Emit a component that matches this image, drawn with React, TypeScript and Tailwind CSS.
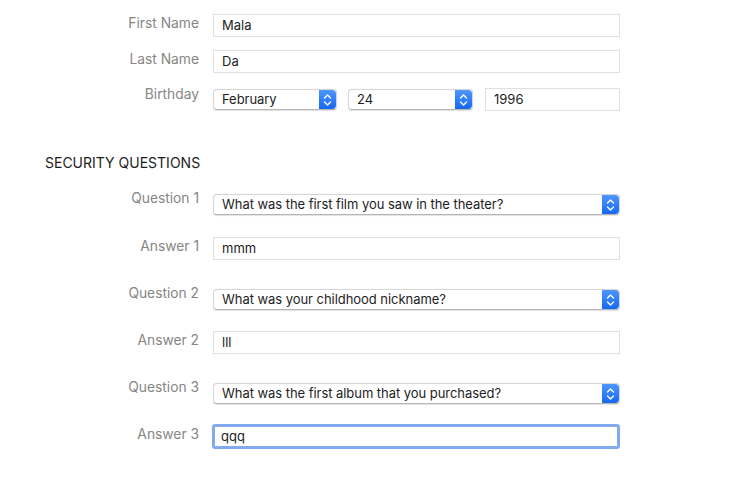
import React from "react";

const font = { fontFamily: "Inter, 'Noto Sans', sans-serif" };

function Stepper() {
  return (
    <div className="w-[17px] h-full rounded-r-[4px] bg-gradient-to-b from-[#4d96ff] to-[#1467f2] flex items-center justify-center shrink-0">
      <svg width="9" height="14" viewBox="0 0 9 14" fill="none">
        <path d="M1.5 5 L4.5 2 L7.5 5" stroke="white" strokeWidth="1.4" strokeLinecap="round" strokeLinejoin="round" />
        <path d="M1.5 9 L4.5 12 L7.5 9" stroke="white" strokeWidth="1.4" strokeLinecap="round" strokeLinejoin="round" />
      </svg>
    </div>
  );
}

function Popup({ value, className = "" }: { value: string; className?: string }) {
  return (
    <div
      className={`h-[21px] flex items-stretch bg-white rounded-[4px] border border-[#d6d6d6] border-b-[#b5b5b5] shadow-[0_0.5px_1px_rgba(0,0,0,0.12)] ${className}`}
    >
      <div className="flex-1 pl-[8px] text-[13px] leading-[19px] text-[#1d1d1d] truncate tracking-[-0.05px]">{value}</div>
      <Stepper />
    </div>
  );
}

function Field({ value, focused = false, className = "" }: { value: string; focused?: boolean; className?: string }) {
  if (focused) {
    return (
      <div className={`h-[25px] -ml-[1px] -mt-[1px] border-[3px] border-[#83aaf0] rounded-[3px] bg-white ${className}`}>
        <div className="pl-[6px] text-[13px] leading-[19px] text-[#1d1d1d]">{value}</div>
      </div>
    );
  }
  return (
    <div className={`h-[23px] border border-[#e0e0e0] bg-white ${className}`}>
      <div className="pl-[8px] text-[13px] leading-[21px] text-[#1d1d1d]">{value}</div>
    </div>
  );
}

// lift: how far the label sits from the control's top edge
function Row({
  label,
  children,
  className = "",
  lift = "mt-[1px]",
}: {
  label: string;
  children: React.ReactNode;
  className?: string;
  lift?: string;
}) {
  return (
    <div className={`flex items-start ${className}`}>
      <div className={`w-[199px] text-right text-[13.8px] leading-[16px] text-[#868686] shrink-0 ${lift}`}>
        {label}
      </div>
      <div className="ml-[14px] w-[407px]">{children}</div>
    </div>
  );
}

export default function App() {
  return (
    <div className="w-[729px] h-[490px] bg-white overflow-hidden" style={font}>
      <div className="pt-[14px] flex flex-col">
        <Row label="First Name">
          <Field value="Mala" />
        </Row>
        <Row label="Last Name" className="mt-[13px]">
          <Field value="Da" />
        </Row>
        <Row label="Birthday" className="mt-[15px]" lift="-mt-[2px]">
          <div className="flex items-center">
            <Popup value="February" className="w-[124px]" />
            <Popup value="24" className="w-[125px] ml-[11px]" />
            <Field value="1996" className="w-[135px] ml-[12px]" />
          </div>
        </Row>

        <div className="mt-[44px] pl-[45px] text-[14px] leading-[16px] text-[#1d1d1d] font-normal">
          SECURITY QUESTIONS
        </div>

        <Row label="Question 1" className="mt-[23px]" lift="-mt-[4px]">
          <Popup value="What was the first film you saw in the theater?" />
        </Row>
        <Row label="Answer 1" className="mt-[22px]">
          <Field value="mmm" />
        </Row>
        <Row label="Question 2" className="mt-[29px]" lift="-mt-[4px]">
          <Popup value="What was your childhood nickname?" />
        </Row>
        <Row label="Answer 2" className="mt-[21px]">
          <Field value="lll" />
        </Row>
        <Row label="Question 3" className="mt-[29px]" lift="-mt-[4px]">
          <Popup value="What was the first album that you purchased?" />
        </Row>
        <Row label="Answer 3" className="mt-[21px]">
          <Field value="qqq" focused />
        </Row>
      </div>
    </div>
  );
}
